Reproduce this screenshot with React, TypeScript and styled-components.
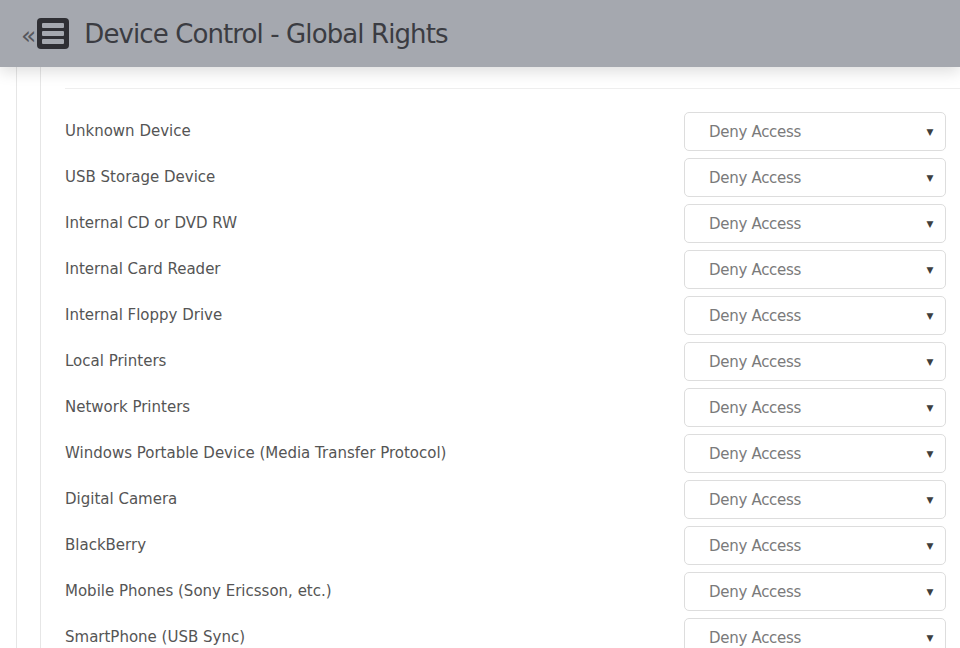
import React from 'react';
import styled, { createGlobalStyle } from 'styled-components';

const GlobalStyle = createGlobalStyle`
  html, body {
    margin: 0;
    padding: 0;
    background: #ffffff;
    overflow: hidden;
  }
  body {
    font-family: 'DejaVu Sans', Verdana, sans-serif;
  }
`;

const Page = styled.div`
  display: flex;
  flex-direction: column;
  width: 960px;
  height: 648px;
  overflow: hidden;
`;

const Header = styled.header`
  position: relative;
  z-index: 2;
  flex-shrink: 0;
  display: flex;
  align-items: center;
  height: 67px;
  padding-left: 21px;
  background: #a5a8af;
  box-shadow: 0 5px 14px rgba(0, 0, 0, 0.13);
`;

const Collapse = styled.span`
  font-size: 25px;
  line-height: 1;
  color: #55565c;
  margin-right: 1px;
  margin-top: 3px;
`;

const Title = styled.h1`
  margin: 0 0 0 15px;
  font-family: 'DejaVu Sans', Verdana, sans-serif;
  font-size: 26px;
  font-weight: normal;
  letter-spacing: -0.9px;
  color: #3b3c42;
`;

const Body = styled.div`
  display: flex;
  flex: 1;
`;

const Gutter = styled.div`
  width: 16px;
  border-right: 1px solid #e6e6e6;
`;

const Spacer = styled.div`
  width: 23px;
`;

const Panel = styled.section`
  flex: 1;
  border-left: 1px solid #e6e6e6;
  padding: 21px 14px 0 24px;
`;

const Divider = styled.div`
  height: 1px;
  background: #eeeeee;
  margin-right: -14px;
  margin-bottom: 23px;
`;

const List = styled.div`
  display: flex;
  flex-direction: column;
  gap: 7px;
`;

const Row = styled.div`
  display: flex;
  align-items: center;
  justify-content: space-between;
  height: 39px;
`;

const Label = styled.span`
  font-size: 15px;
  letter-spacing: 0;
  color: #555555;
  margin-top: -2px;
`;

const Select = styled.div`
  display: flex;
  align-items: center;
  justify-content: space-between;
  box-sizing: border-box;
  width: 262px;
  height: 39px;
  padding: 0 12px 0 24px;
  border: 1px solid #dddddd;
  border-radius: 5px;
  background: #ffffff;
  font-size: 15px;
  letter-spacing: -0.3px;
  color: #7a7a7a;
`;

const Caret = styled.span`
  font-size: 9px;
  color: #3e3e3e;
`;

function MenuIcon() {
  return (
    <svg width="32" height="31" viewBox="0 0 32 31">
      <rect x="0" y="0" width="32" height="31" rx="4" fill="#2f2f34" />
      <rect x="5" y="5" width="22" height="5" rx="1" fill="#a5a8af" />
      <rect x="5" y="13" width="22" height="5" rx="1" fill="#a5a8af" />
      <rect x="5" y="21" width="22" height="5" rx="1" fill="#a5a8af" />
    </svg>
  );
}

const devices = [
  'Unknown Device',
  'USB Storage Device',
  'Internal CD or DVD RW',
  'Internal Card Reader',
  'Internal Floppy Drive',
  'Local Printers',
  'Network Printers',
  'Windows Portable Device (Media Transfer Protocol)',
  'Digital Camera',
  'BlackBerry',
  'Mobile Phones (Sony Ericsson, etc.)',
  'SmartPhone (USB Sync)',
];

export default function App() {
  return (
    <>
      <GlobalStyle />
      <Page>
        <Header>
          <Collapse>«</Collapse>
          <MenuIcon />
          <Title>Device Control - Global Rights</Title>
        </Header>
        <Body>
          <Gutter />
          <Spacer />
          <Panel>
            <Divider />
            <List>
              {devices.map((name) => (
                <Row key={name}>
                  <Label>{name}</Label>
                  <Select>
                    <span>Deny Access</span>
                    <Caret>▼</Caret>
                  </Select>
                </Row>
              ))}
            </List>
          </Panel>
        </Body>
      </Page>
    </>
  );
}
